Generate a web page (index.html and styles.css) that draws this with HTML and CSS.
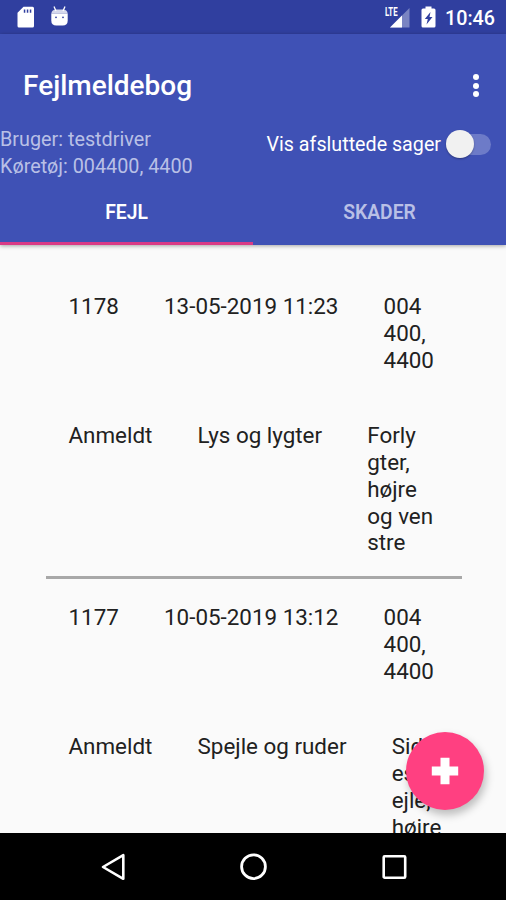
FILE: index.html
```
<!DOCTYPE html>
<html lang="da">
<head>
  <meta charset="UTF-8">
  <meta name="viewport" content="width=device-width, initial-scale=1.0">
  <title>Fejlmeldebog</title>
  <link rel="stylesheet" href="styles.css">
</head>
<body>
  <div class="status-bar">
    <svg class="sd-icon" width="18" height="22" viewBox="0 0 18 22">
      <path fill="#fff" fill-rule="evenodd" d="M6.500 .8H15.500Q17 .8 17 2.300V20Q17 21.500 15.500 21.500H2Q.5 21.500 .5 20V6.800ZM6.800 3.500V6.800H8.300V3.500ZM9.800 3.500V6.800H11.300V3.500ZM12.800 3.500V6.800H14.300V3.500Z"/>
    </svg>
    <svg class="debug-icon" width="20" height="22" viewBox="0 0 20 22">
      <path stroke="#fff" stroke-width="1.300" d="M4 .5L6 5M15 .5L13 5"/>
      <path fill="#fff" d="M1.300 7.500Q1.800 3.500 6.500 3.500H12.500Q17.200 3.500 17.700 7.500Z" opacity=".8"/>
      <path fill="#fff" d="M1.300 7.500H17.700V14.500Q17.700 19.500 12.700 19.500H6.300Q1.300 19.500 1.300 14.500Z"/>
      <circle cx="6" cy="11.300" r=".9" fill="#303f9f"/>
      <circle cx="13" cy="11.300" r=".9" fill="#303f9f"/>
    </svg>
    <div class="status-right">
      <div class="signal">
        <span class="lte">LTE</span>
        <svg width="21" height="20" viewBox="0 0 21 20">
          <path fill="#7a84c2" d="M20.500 0V19.500H1Z"/>
          <path fill="#fff" d="M13 7.500V19.500H1Z"/>
        </svg>
      </div>
      <svg class="battery" width="15" height="22" viewBox="0 0 15 22">
        <path fill="#fff" fill-rule="evenodd" d="M4.500 .5H10.500V2.500H13Q14.500 2.500 14.500 4V20Q14.500 21.500 13 21.500H2Q.5 21.500 .5 20V4Q.5 2.500 2 2.500H4.500ZM9.500 6L3.800 13H6.800L5.500 18.500L11.500 11H8.500Z"/>
      </svg>
      <span class="time">10:46</span>
    </div>
  </div>

  <header class="app-bar">
    <div class="toolbar">
      <h1>Fejlmeldebog</h1>
      <div class="menu"><i></i><i></i><i></i></div>
    </div>
    <div class="info">
      <div class="user">
        <div>Bruger: testdriver</div>
        <div>Køretøj: 004400, 4400</div>
      </div>
      <div class="toggle">
        <span>Vis afsluttede sager</span>
        <div class="switch"></div>
      </div>
    </div>
    <div class="tabs">
      <div class="tab active">FEJL</div>
      <div class="tab">SKADER</div>
    </div>
  </header>

  <main class="list">
    <div class="item">
      <div class="row">
        <div>1178</div>
        <div>13-05-2019 11:23</div>
        <div>004<br>400,<br>4400</div>
      </div>
      <div class="row">
        <div>Anmeldt</div>
        <div>Lys og lygter</div>
        <div>Forly<br>gter,<br>højre<br>og ven<br>stre</div>
      </div>
    </div>
    <div class="item">
      <div class="row">
        <div>1177</div>
        <div>10-05-2019 13:12</div>
        <div>004<br>400,<br>4400</div>
      </div>
      <div class="row">
        <div>Anmeldt</div>
        <div>Spejle og ruder</div>
        <div>Sid<br>esp<br>ejle,<br>højre</div>
      </div>
    </div>
  </main>

  <div class="fab">
    <svg width="28" height="28" viewBox="0 0 28 28">
      <path fill="#fff" d="M9.500 .8H18.500V9.500H27.200V18.500H18.500V27.200H9.500V18.500H.8V9.500H9.500Z"/>
    </svg>
  </div>

  <nav class="nav-bar">
    <svg width="28" height="30" viewBox="0 0 28 30">
      <path fill="none" stroke="#fff" stroke-width="2.600" stroke-linejoin="round" d="M4 15L24.300 3.200V26.800Z"/>
    </svg>
    <svg width="28" height="30" viewBox="0 0 28 30">
      <circle cx="13.500" cy="14.700" r="11.900" fill="none" stroke="#fff" stroke-width="2.800"/>
    </svg>
    <svg width="28" height="30" viewBox="0 0 28 30">
      <rect x="3.700" y="4.200" width="21.500" height="21.500" rx="1" fill="none" stroke="#fff" stroke-width="2.600"/>
    </svg>
  </nav>
</body>
</html>
```

FILE: styles.css
```
* {
  box-sizing: border-box;
}

body {
  display: flex;
  flex-direction: column;
  position: relative;
  height: 900px;
  margin: 0;
  overflow: hidden;
  background-color: #fafafa;
  font-family: Roboto, sans-serif;
}

svg {
  display: block;
  flex: none;
}

.status-bar {
  display: flex;
  flex: none;
  align-items: flex-start;
  height: 34px;
  padding: 6px 11px 0 17px;
  background-color: #303f9f;
  color: #fff;
}

.debug-icon {
  margin-left: 15px;
}

.status-right {
  display: flex;
  margin-left: auto;
}

.signal {
  position: relative;
  padding: 2px 0 0 5px;
}

.lte {
  position: absolute;
  top: 0;
  left: 1px;
  font-size: 12px;
  font-weight: 700;
  line-height: 12px;
  transform: scaleX(0.65);
  transform-origin: left;
}

.battery {
  margin-left: 11px;
}

.time {
  margin-left: 9px;
  font-size: 19.7px;
  font-weight: 500;
  line-height: 25px;
}

.app-bar {
  position: relative;
  z-index: 1;
  flex: none;
  height: 211px;
  background-color: #3f51b5;
  box-shadow: 0 1px 4px rgba(0, 0, 0, 0.35);
}

.toolbar {
  display: flex;
  align-items: center;
  justify-content: space-between;
  height: 91px;
  padding: 12px 27px 0 23px;
}

h1 {
  margin: 0;
  color: #fff;
  font-size: 28px;
  font-weight: 500;
}

.menu {
  display: grid;
  gap: 2.4px;
}

.menu i {
  width: 6px;
  height: 6px;
  border-radius: 50%;
  background-color: #fff;
}

.info {
  display: flex;
  justify-content: space-between;
  height: 55px;
  padding-right: 15px;
}

.user {
  padding: 2px 0 0;
  color: #b9c0e6;
  font-size: 19.8px;
  line-height: 26.5px;
}

.toggle {
  display: flex;
  align-items: center;
  height: 38px;
  color: #fff;
  font-size: 19.7px;
}

.switch {
  position: relative;
  width: 40px;
  height: 21px;
  margin-left: 10px;
  border-radius: 11px;
  background-color: #6d7bc8;
}

.switch::before {
  content: '';
  position: absolute;
  top: -4px;
  left: -5px;
  width: 28px;
  height: 28px;
  border-radius: 50%;
  background-color: #f1f1f1;
  box-shadow: 0 1px 2px rgba(0, 0, 0, 0.3);
}

.tabs {
  display: flex;
  height: 65px;
}

.tab {
  flex: 1;
  padding-top: 21px;
  border-bottom: 3px solid transparent;
  color: #b9c0e6;
  font-size: 19.3px;
  font-weight: 600;
  line-height: 24px;
  text-align: center;
}

.tab.active {
  border-color: #d93a86;
  color: #fff;
}

.list {
  flex: 1;
  min-height: 0;
  overflow: hidden;
  padding: 23px 44px 0 46px;
}

.item {
  padding: 25px 0 20px;
  color: #212121;
  font-size: 22.4px;
  line-height: 26.75px;
}

.item + .item {
  border-top: 3px solid #a8a8a8;
}

.row {
  display: flex;
  gap: 45.2px;
  padding: 0 22.5px;
  white-space: nowrap;
}

.row + .row {
  margin-top: 49px;
}

.fab {
  position: absolute;
  top: 732px;
  left: 406px;
  z-index: 2;
  display: flex;
  align-items: center;
  justify-content: center;
  width: 78px;
  height: 78px;
  border-radius: 50%;
  background-color: #ff4081;
  box-shadow: 2px 5px 9px rgba(0, 0, 0, 0.25);
}

.nav-bar {
  display: flex;
  flex: none;
  align-items: center;
  justify-content: space-between;
  height: 67px;
  padding: 0 98px 0 99px;
  background-color: #000;
}
```
